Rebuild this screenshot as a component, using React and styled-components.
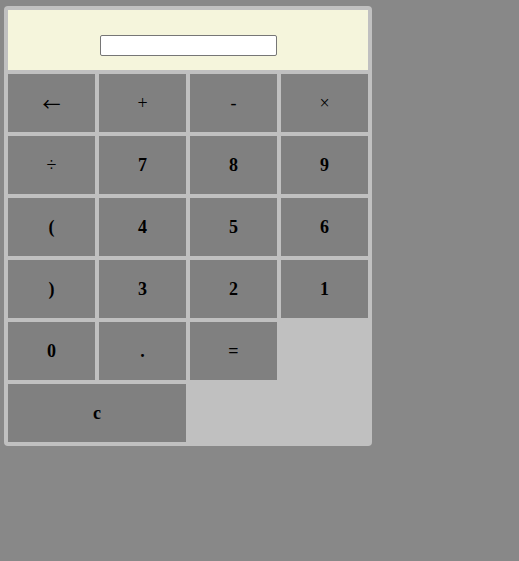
import React, { useState } from 'react';
import styled, { createGlobalStyle } from 'styled-components';

const GlobalStyle = createGlobalStyle`
  body {
    margin: 0;
    background-color: #888888;
    font-family: "Liberation Serif", "Times New Roman", serif;
  }
`;

const Calculator = styled.div`
  display: grid;
  grid-template-columns: repeat(4, 87px);
  grid-template-rows: 60px;
  grid-auto-rows: 58px;
  gap: 4px;
  width: max-content;
  margin: 6px 0 0 4px;
  padding: 4px;
  background-color: #c0c0c0;
  border-radius: 4px;
`;

const Display = styled.div`
  grid-column: span 4;
  box-sizing: border-box;
  display: flex;
  justify-content: center;
  align-items: flex-start;
  padding-top: 25px;
  background-color: #f5f5dc;
`;

const Screen = styled.input`
  width: 177px;
  height: 21px;
  box-sizing: border-box;
  padding: 1px 2px;
  border: 1px solid #767676;
  border-radius: 2px;
  background: #fff;
  font-family: "Liberation Sans", Arial, sans-serif;
  font-size: 13px;
  margin-left: 1px;
`;

const Key = styled.button`
  grid-column: span ${({ $span }) => $span || 1};
  border: none;
  margin: 0;
  padding: 0;
  background-color: #808080;
  color: #000;
  font-family: ${({ $symbol }) =>
    $symbol ? '"Noto Sans CJK SC", sans-serif' : '"Liberation Serif", "Times New Roman", serif'};
  font-size: 18px;
  font-weight: ${({ $light }) => ($light ? 'normal' : 'bold')};
  cursor: pointer;
`;

const keys = [
  { label: '←', light: true, symbol: true },
  { label: '+', light: true },
  { label: '-', light: true },
  { label: '×', light: true },
  { label: '÷', light: true },
  { label: '7' },
  { label: '8' },
  { label: '9' },
  { label: '(' },
  { label: '4' },
  { label: '5' },
  { label: '6' },
  { label: ')' },
  { label: '3' },
  { label: '2' },
  { label: '1' },
  { label: '0' },
  { label: '.' },
  { label: '=' },
  { label: null },
  { label: 'c', span: 2 },
];

const App = () => {
  const [value, setValue] = useState('');

  return (
    <>
      <GlobalStyle />
      <Calculator>
        <Display>
          <Screen value={value} onChange={(e) => setValue(e.target.value)} />
        </Display>
        {keys.map((key, index) =>
          key.label === null ? (
            <span key={index} />
          ) : (
            <Key key={index} $span={key.span} $light={key.light} $symbol={key.symbol}>
              {key.label}
            </Key>
          )
        )}
      </Calculator>
    </>
  );
};

export default App;
